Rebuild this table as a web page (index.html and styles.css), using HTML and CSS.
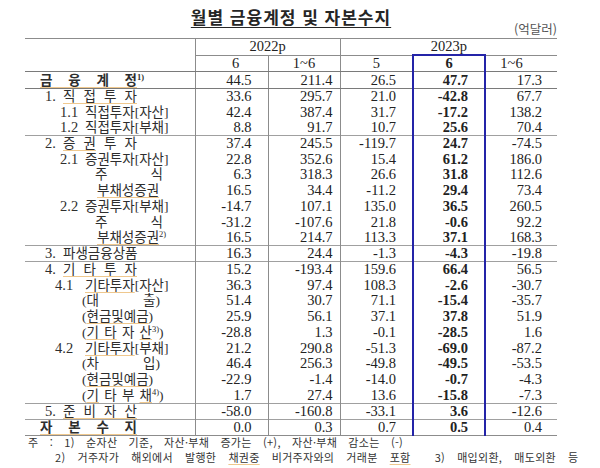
FILE: index.html
```html
<!DOCTYPE html>
<html lang="ko">
<head>
<meta charset="utf-8">
<title>월별 금융계정 및 자본수지</title>
<link rel="stylesheet" href="styles.css">
</head>
<body>
<div class="page">
  <h1 class="title"><span>월별 금융계정 및 자본수지</span></h1>
  <div class="unit">(억달러)</div>
  <table class="fs">
    <colgroup>
      <col class="c-lab"><col class="c-n"><col class="c-n2"><col class="c-n"><col class="c-n2"><col class="c-n2">
    </colgroup>
    <thead>
      <tr class="h1">
        <th rowspan="2" class="lab-h"></th>
        <th colspan="2" class="yr vl">2022p</th>
        <th colspan="3" class="yr vl">2023p</th>
      </tr>
      <tr class="h2">
        <th class="vl m1">6</th>
        <th class="vl">1~6</th>
        <th class="vl">5</th>
        <th class="hl hl-top">6</th>
        <th class="m5">1~6</th>
      </tr>
    </thead>
    <tbody>
      <tr class="r total">
        <td class="lab l0 strong"><span class="j w97 sp">금 융 계 정</span><sup class="fn fnb">1)</sup></td>
        <td class="n vl">44.5</td><td class="nb vl">211.4</td><td class="n vl">26.5</td><td class="n hl">47.7</td><td class="ne">17.3</td>
      </tr>
      <tr class="r">
        <td class="lab l1"><span class="pre">1.</span><span class="j w74 sp">직 접 투 자</span></td>
        <td class="n vl">33.6</td><td class="nb vl">295.7</td><td class="n vl">21.0</td><td class="n hl">-42.8</td><td class="ne">67.7</td>
      </tr>
      <tr class="r">
        <td class="lab l2"><span class="pre p25">1.1</span>직접투자[자산]</td>
        <td class="n vl">42.4</td><td class="nb vl">387.4</td><td class="n vl">31.7</td><td class="n hl">-17.2</td><td class="ne">138.2</td>
      </tr>
      <tr class="r">
        <td class="lab l2"><span class="pre p25">1.2</span>직접투자[부채]</td>
        <td class="n vl">8.8</td><td class="nb vl">91.7</td><td class="n vl">10.7</td><td class="n hl">25.6</td><td class="ne">70.4</td>
      </tr>
      <tr class="r sep">
        <td class="lab l1"><span class="pre">2.</span><span class="j w74"><span class="sp">증 권</span> 투 자</span></td>
        <td class="n vl">37.4</td><td class="nb vl">245.5</td><td class="n vl">-119.7</td><td class="n hl">24.7</td><td class="ne">-74.5</td>
      </tr>
      <tr class="r">
        <td class="lab l2"><span class="pre p25">2.1</span>증권투자[자산]</td>
        <td class="n vl">22.8</td><td class="nb vl">352.6</td><td class="n vl">15.4</td><td class="n hl">61.2</td><td class="ne">186.0</td>
      </tr>
      <tr class="r">
        <td class="lab l3"><span class="j w68">주 식</span></td>
        <td class="n vl">6.3</td><td class="nb vl">318.3</td><td class="n vl">26.6</td><td class="n hl">31.8</td><td class="ne">112.6</td>
      </tr>
      <tr class="r">
        <td class="lab l3b"><span class="sp">부채성증권</span></td>
        <td class="n vl">16.5</td><td class="nb vl">34.4</td><td class="n vl">-11.2</td><td class="n hl">29.4</td><td class="ne">73.4</td>
      </tr>
      <tr class="r">
        <td class="lab l2"><span class="pre p25">2.2</span>증권투자[부채]</td>
        <td class="n vl">-14.7</td><td class="nb vl">107.1</td><td class="n vl">135.0</td><td class="n hl">36.5</td><td class="ne">260.5</td>
      </tr>
      <tr class="r">
        <td class="lab l3"><span class="j w68">주 식</span></td>
        <td class="n vl">-31.2</td><td class="nb vl">-107.6</td><td class="n vl">21.8</td><td class="n hl">-0.6</td><td class="ne">92.2</td>
      </tr>
      <tr class="r">
        <td class="lab l3b"><span class="sp">부채성증권</span><sup class="fn">2)</sup></td>
        <td class="n vl">16.5</td><td class="nb vl">214.7</td><td class="n vl">113.3</td><td class="n hl">37.1</td><td class="ne">168.3</td>
      </tr>
      <tr class="r sep">
        <td class="lab l1"><span class="pre">3.</span>파생금융상품</td>
        <td class="n vl">16.3</td><td class="nb vl">24.4</td><td class="n vl">-1.3</td><td class="n hl">-4.3</td><td class="ne">-19.8</td>
      </tr>
      <tr class="r sep">
        <td class="lab l1"><span class="pre">4.</span><span class="j w74 sp">기 타 투 자</span></td>
        <td class="n vl">15.2</td><td class="nb vl">-193.4</td><td class="n vl">159.6</td><td class="n hl">66.4</td><td class="ne">56.5</td>
      </tr>
      <tr class="r">
        <td class="lab l2b"><span class="pre p30">4.1</span><span class="sp">기타투자</span>[자산]</td>
        <td class="n vl">36.3</td><td class="nb vl">97.4</td><td class="n vl">108.3</td><td class="n hl">-2.6</td><td class="ne">-30.7</td>
      </tr>
      <tr class="r">
        <td class="lab l4"><span class="j w78">(대 출)</span></td>
        <td class="n vl">51.4</td><td class="nb vl">30.7</td><td class="n vl">71.1</td><td class="n hl">-15.4</td><td class="ne">-35.7</td>
      </tr>
      <tr class="r">
        <td class="lab l4">(<span class="sp">현금및예금</span>)</td>
        <td class="n vl">25.9</td><td class="nb vl">56.1</td><td class="n vl">37.1</td><td class="n hl">37.8</td><td class="ne">51.9</td>
      </tr>
      <tr class="r">
        <td class="lab l4"><span class="j w70">(<span class="sp">기 타</span> 자 <span class="sp">산</span></span><sup class="fn">3)</sup>)</td>
        <td class="n vl">-28.8</td><td class="nb vl">1.3</td><td class="n vl">-0.1</td><td class="n hl">-28.5</td><td class="ne">1.6</td>
      </tr>
      <tr class="r">
        <td class="lab l2b"><span class="pre p30">4.2</span><span class="sp">기타투자</span>[부채]</td>
        <td class="n vl">21.2</td><td class="nb vl">290.8</td><td class="n vl">-51.3</td><td class="n hl">-69.0</td><td class="ne">-87.2</td>
      </tr>
      <tr class="r">
        <td class="lab l4"><span class="j w78">(차 입)</span></td>
        <td class="n vl">46.4</td><td class="nb vl">256.3</td><td class="n vl">-49.8</td><td class="n hl">-49.5</td><td class="ne">-53.5</td>
      </tr>
      <tr class="r">
        <td class="lab l4">(<span class="sp">현금및예금</span>)</td>
        <td class="n vl">-22.9</td><td class="nb vl">-1.4</td><td class="n vl">-14.0</td><td class="n hl">-0.7</td><td class="ne">-4.3</td>
      </tr>
      <tr class="r">
        <td class="lab l4"><span class="j w70">(<span class="sp">기</span> 타 부 <span class="sp">채</span></span><sup class="fn">4)</sup>)</td>
        <td class="n vl">1.7</td><td class="nb vl">27.4</td><td class="n vl">13.6</td><td class="n hl">-15.8</td><td class="ne">-7.3</td>
      </tr>
      <tr class="r sep">
        <td class="lab l1"><span class="pre">5.</span><span class="j w74 sp">준 비 자 산</span></td>
        <td class="n vl">-58.0</td><td class="nb vl">-160.8</td><td class="n vl">-33.1</td><td class="n hl">3.6</td><td class="ne">-12.6</td>
      </tr>
      <tr class="r sep last">
        <td class="lab l0 strong"><span class="j w97 sp">자 본 수 지</span></td>
        <td class="n vl">0.0</td><td class="nb vl">0.3</td><td class="n vl">0.7</td><td class="n hl hl-bot">0.5</td><td class="ne">0.4</td>
      </tr>
    </tbody>
  </table>
  <div class="notes">
    <p class="note note-1">주 : 1) 순자산 기준, 자산·부채 증가는 (+), 자산·부채 감소는 (-)</p>
    <p class="note note-2">2) 거주자가 해외에서 발행한 <span class="sp">채권중</span> 비거주자와의 거래분 <span class="sp">포함</span>&nbsp; 3) 매입외환, 매도외환 등</p>
  </div>
</div>
</body>
</html>
```

FILE: styles.css
```css
html, body {
  margin: 0;
  padding: 0;
  background: #ffffff;
}

body {
  color: #222222;
  font-family: "Liberation Serif", "Noto Sans CJK KR", serif;
}

.page {
  width: 532px;
  margin-left: 25px;
}

.title {
  margin: 7px 0 0;
  height: 20px;
  text-align: center;
  font: 700 17px/20px "Noto Sans CJK KR", sans-serif;
  letter-spacing: 1px;
  color: #262626;
}

.title span {
  text-decoration: underline;
  text-decoration-thickness: 1px;
  text-underline-offset: 3px;
}

.unit {
  margin-top: -5px;
  height: 14px;
  text-align: right;
  font: 400 12.5px/14px "Noto Sans CJK KR", sans-serif;
  color: #555555;
}

.fs {
  margin-top: 2px;
  width: 532px;
  table-layout: fixed;
  border-collapse: collapse;
  font-family: "Liberation Serif", "Noto Sans CJK KR", serif;
  font-size: 14.5px;
  color: #222222;
}

.c-lab { width: 170px; }
.c-n { width: 73px; }
.c-n2 { width: 72px; }

.fs th,
.fs td {
  padding: 0;
  line-height: 15px;
  white-space: nowrap;
  vertical-align: middle;
  font-weight: 400;
}

/* header */
.h1 { height: 15px; }
.h2 { height: 16px; }

.h1 th {
  border-top: 1px solid #8c8c8c;
  text-align: center;
}

.h1 .yr {
  border-bottom: 1px solid #8c8c8c;
}

.lab-h {
  border-bottom: 1px solid #7a7a7a;
}

.h2 th {
  border-bottom: 1px solid #7a7a7a;
  text-align: center;
}

.h2 .m1 { padding-left: 8px; }
.h2 .m5 { padding-right: 20px; }

.vl { border-left: 1px solid #8c8c8c; }

/* highlight column */
.hl {
  border-left: 2px solid #2424a8;
  border-right: 2px solid #2424a8;
  font-weight: 700 !important;
}

.hl-top { border-top: 2px solid #2424a8; }
.hl-bot { border-bottom: 2px solid #2424a8; }

/* body rows */
.r { height: 15.73px; }
.total { height: 17px; }
.total td { border-bottom: 1px solid #7a7a7a; }
.sep td { border-top: 1px solid #a0a0a0; }
.last td { border-bottom: 1px solid #8c8c8c; }

.n, .nb, .ne { text-align: right; }
.n { padding-right: 16px !important; }
.nb { padding-right: 7px !important; }
.ne { padding-right: 15px !important; }

.lab {
  text-align: left;
  font-size: 13.5px;
  color: #2e2e2e;
}

.strong { font-weight: 700 !important; }

.l0 { padding-left: 15px !important; }
.l1 { padding-left: 20px !important; }
.l2 { padding-left: 35px !important; }
.l2b { padding-left: 30px !important; }
.l3 { padding-left: 70px !important; }
.l3b { padding-left: 72px !important; }
.l4 { padding-left: 57px !important; }

.pre {
  display: inline-block;
  width: 18px;
  font-size: 14.5px;
}

.p25 { width: 25px; }
.p30 { width: 30px; }

.j {
  display: inline-block;
  text-align: justify;
  text-align-last: justify;
}

.w97 { width: 97px; }
.w74 { width: 74px; }
.w68 { width: 68px; }
.w70 { width: 70px; }
.w78 { width: 78px; }

.sp {
  text-decoration: underline;
  text-decoration-color: #efc88e;
  text-decoration-thickness: 1px;
  text-underline-offset: 2px;
}

.fn {
  font-size: 8.5px;
  line-height: 0;
  vertical-align: 5px;
}

.fnb { font-weight: 700; }

/* notes */
.notes {
  margin-top: -1px;
  font: 400 11px/15px "Noto Sans CJK KR", sans-serif;
  letter-spacing: 0.3px;
  color: #333333;
}

.note {
  margin: 0;
  height: 15px;
  white-space: nowrap;
}

.note-1 {
  padding-left: 3px;
  word-spacing: 7.9px;
}

.note-2 {
  padding-left: 30px;
  word-spacing: 8.7px;
}
```
